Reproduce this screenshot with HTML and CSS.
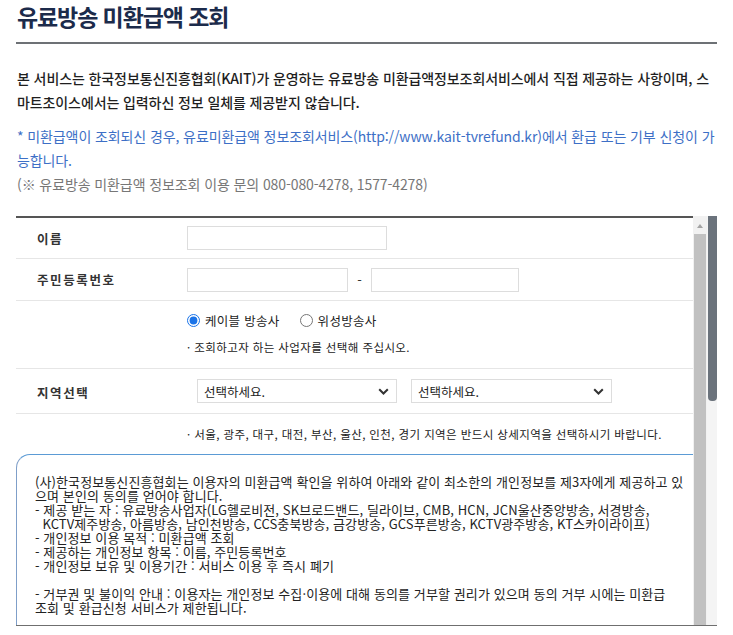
FILE: index.html
```html
<!DOCTYPE html>
<html lang="ko">
<head>
<meta charset="utf-8">
<title>유료방송 미환급액 조회</title>
<link rel="stylesheet" href="styles.css">
</head>
<body>
<div class="page">
  <h1 class="title">유료방송 미환급액 조회</h1>
  <div class="rule"></div>

  <p class="desc">본 서비스는 한국정보통신진흥협회(KAIT)가 운영하는 유료방송 미환급액정보조회서비스에서 직접 제공하는 사항이며, 스마트초이스에서는 입력하신 정보 일체를 제공받지 않습니다.</p>
  <p class="notice">* 미환급액이 조회되신 경우, 유료미환급액 정보조회서비스(http://www.kait-tvrefund.kr)에서 환급 또는 기부 신청이 가능합니다.</p>
  <p class="contact">(※ 유료방송 미환급액 정보조회 이용 문의 080-080-4278, 1577-4278)</p>

  <div class="frame">
    <div class="main">
      <div class="row">
        <div class="label">이름</div>
        <div class="field"><input class="text name" type="text"></div>
      </div>
      <div class="row jumin">
        <div class="label">주민등록번호</div>
        <div class="field">
          <input class="text jumin1" type="text">
          <span class="dash">-</span>
          <input class="text jumin2" type="password">
        </div>
      </div>
      <div class="block radios">
        <div class="radio-line">
          <label class="radio"><input type="radio" name="kind" checked> 케이블 방송사</label>
          <label class="radio"><input type="radio" name="kind"> 위성방송사</label>
        </div>
        <div class="note">· 조회하고자 하는 사업자를 선택해 주십시오.</div>
      </div>
      <div class="row region">
        <div class="label">지역선택</div>
        <div class="field selects">
          <div class="select"><span>선택하세요.</span><svg width="11" height="7" viewBox="0 0 11 7"><path d="M1.2 1.2 L5.5 5.5 L9.8 1.2" fill="none" stroke="#333" stroke-width="2"/></svg></div>
          <div class="select"><span>선택하세요.</span><svg width="11" height="7" viewBox="0 0 11 7"><path d="M1.2 1.2 L5.5 5.5 L9.8 1.2" fill="none" stroke="#333" stroke-width="2"/></svg></div>
        </div>
      </div>
      <div class="block region-note">
        <div class="note">· 서울, 광주, 대구, 대전, 부산, 울산, 인천, 경기 지역은 반드시 상세지역을 선택하시기 바랍니다.</div>
      </div>
      <div class="consent">
        <div class="consent-text">(사)한국정보통신진흥협회는 이용자의 미환급액 확인을 위하여 아래와 같이 최소한의 개인정보를 제3자에게 제공하고 있
으며 본인의 동의를 얻어야 합니다.
- 제공 받는 자 : 유료방송사업자(LG헬로비전, SK브로드밴드, 딜라이브, CMB, HCN, JCN울산중앙방송, 서경방송,
  KCTV제주방송, 아름방송, 남인천방송, CCS충북방송, 금강방송, GCS푸른방송, KCTV광주방송, KT스카이라이프)
- 개인정보 이용 목적 : 미환급액 조회
- 제공하는 개인정보 항목 : 이름, 주민등록번호
- 개인정보 보유 및 이용기간 : 서비스 이용 후 즉시 폐기

- 거부권 및 불이익 안내 : 이용자는 개인정보 수집·이용에 대해 동의를 거부할 권리가 있으며 동의 거부 시에는 미환급
조회 및 환급신청 서비스가 제한됩니다.</div>
      </div>
    </div>
    <div class="bar inner-bar">
      <span class="arrow"></span>
      <span class="thumb"></span>
    </div>
    <div class="bar outer-bar">
      <span class="thumb"></span>
    </div>
  </div>
</div>
</body>
</html>
```

FILE: styles.css
```css
* { box-sizing: border-box; }
html, body { margin: 0; padding: 0; background: #fff; }
body {
  font-family: "Noto Sans CJK KR", "Noto Sans", sans-serif;
  color: #222;
}
.page {
  width: 733px;
  padding: 0 16px;
}
.title {
  margin: 0;
  font-size: 23px;
  line-height: 32px;
  font-weight: 700;
  letter-spacing: -1.1px;
  color: #1c2b4b;
  padding-left: 1px;
}
.rule {
  margin-top: 10px;
  height: 2px;
  background: #6d7175;
}
.desc, .notice, .contact {
  margin: 0;
  font-size: 14px;
  line-height: 24px;
  letter-spacing: -0.1px;
  padding-left: 1px;
}
.desc {
  margin-top: 22px;
  font-weight: 500;
  color: #1f1f1f;
}
.notice {
  margin-top: 10px;
  color: #3d6fc6;
}
.contact {
  color: #777;
}

.frame {
  margin-top: 20px;
  height: 410px;
  display: flex;
  border-bottom: 1px solid #6f6f6f;
}
.main {
  flex: 1;
  min-width: 0;
  border-top: 2px solid #555;
  overflow: hidden;
}
.row {
  display: flex;
  align-items: center;
  height: 41px;
  border-bottom: 1px solid #e6e6e6;
}
.row.jumin { height: 42px; }
.label {
  width: 171px;
  padding-left: 21px;
  font-size: 12.5px;
  font-weight: 700;
  letter-spacing: 1.6px;
  color: #333;
}
.field {
  display: flex;
  align-items: center;
}
.text {
  height: 24px;
  border: 1px solid #ddd;
  background: #fff;
  padding: 0 4px;
  font-family: inherit;
  outline: none;
}
.name { width: 200px; }
.jumin1 { width: 161px; }
.jumin2 { width: 148px; }
.dash {
  width: 23px;
  text-align: center;
  font-size: 13px;
  color: #333;
}
.block {
  padding-left: 171px;
  border-bottom: 1px solid #e6e6e6;
}
.radios {
  padding-top: 9px;
  padding-bottom: 11px;
}
.radio-line {
  display: flex;
  align-items: center;
  height: 20px;
  gap: 20px;
}
.radio {
  display: flex;
  align-items: center;
  font-size: 12.5px;
  color: #222;
  letter-spacing: 0.3px;
}
.radio input {
  margin: 0 5px 0 0;
  width: 13px;
  height: 13px;
  accent-color: #1a73e8;
}
.note {
  margin-top: 7px;
  font-size: 11.5px;
  line-height: 20px;
  color: #222;
  letter-spacing: 0.4px;
}
.region { height: 45px; }
.region .label { padding-top: 3px; }
.selects {
  padding-left: 10px;
  gap: 14px;
}
.select {
  display: flex;
  align-items: center;
  justify-content: space-between;
  width: 200px;
  height: 24px;
  padding: 0 7px 0 6px;
  border: 1px solid #ddd;
  font-size: 12.5px;
  color: #222;
}
.select + .select { width: 201px; }
.region-note {
  padding-top: 3px;
  border-bottom: none;
}
.region-note .note { margin-top: 7px; }
.consent {
  margin-top: 10px;
  height: 260px;
  border-top: 1px solid #5b9bd5;
  border-left: 1px solid #7f9fc9;
  border-top-left-radius: 14px;
  padding: 20px 0 0 18px;
}
.consent-text {
  white-space: pre;
  font-size: 13px;
  line-height: 14px;
  color: #222;
  letter-spacing: 0.1px;
}

.bar {
  display: flex;
  flex-direction: column;
  align-items: center;
}
.inner-bar {
  width: 14px;
  background: #f1f1f1;
  padding-top: 1px;
}
.inner-bar .arrow {
  margin-top: 7px;
  width: 0;
  height: 0;
  border-left: 3.5px solid transparent;
  border-right: 3.5px solid transparent;
  border-bottom: 4px solid #a3a3a3;
}
.inner-bar .thumb {
  margin-top: 6px;
  width: 12px;
  flex: 1;
  background: #c1c1c1;
}
.outer-bar {
  width: 10px;
  background: #f4f4f4;
}
.outer-bar .thumb {
  width: 9px;
  height: 185px;
  background: #6b737c;
  border-radius: 0 0 4px 4px;
}
```
